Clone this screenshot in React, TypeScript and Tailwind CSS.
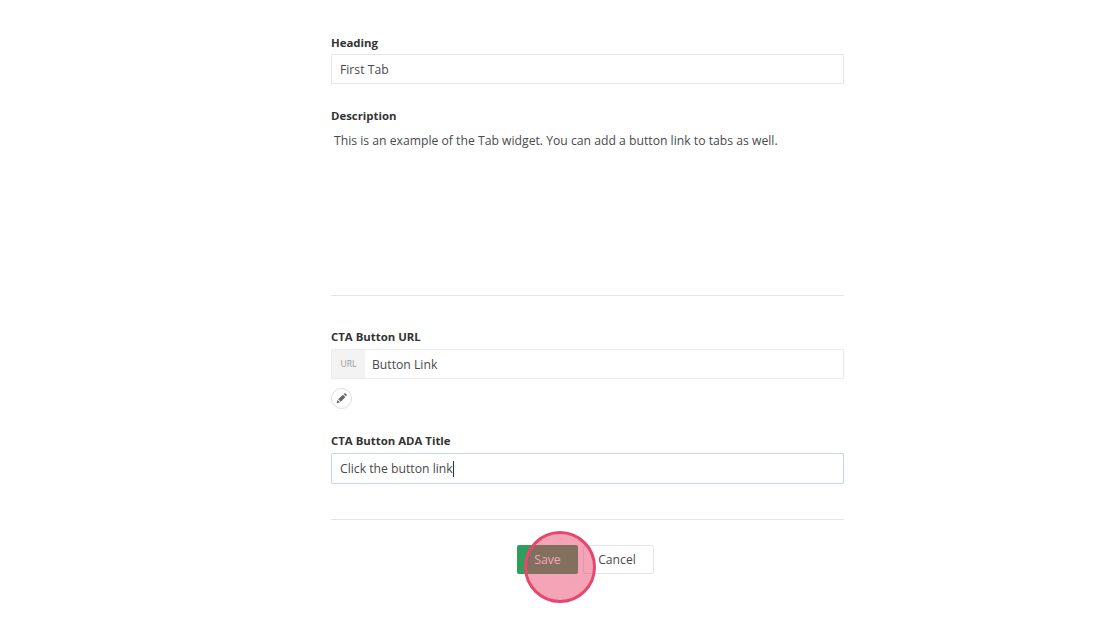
export default function App() {
  return (
    <div className="relative h-[627px] w-[1120px] overflow-hidden bg-white font-['Open_Sans',sans-serif] text-[12.2px] text-[#4a4a4a]">
      <div className="ml-[331px] flex w-[513px] flex-col pt-[34px]">
        <label className="text-[11.4px] leading-[18px] font-bold text-[#333]">Heading</label>
        <div className="mt-[2px] flex h-[30px] items-center border border-[#e8e8e8] px-2 pt-[2px]">First Tab</div>

        <label className="mt-[23px] text-[11.4px] leading-[18px] font-bold text-[#333]">Description</label>
        <p className="mt-[7px] h-[163px] pl-[3px] leading-[18px]">
          This is an example of the Tab widget. You can add a button link to tabs as well.
        </p>

        <hr className="border-[#e6e6e6]" />

        <label className="mt-[32px] text-[11.4px] leading-[18px] font-bold text-[#333]">CTA Button URL</label>
        <div className="mt-[3px] flex h-[30px] items-center border border-[#ebebeb]">
          <span className="flex h-full w-[33px] items-center justify-center bg-[#f3f3f3] text-[8.5px] text-[#999]">URL</span>
          <span className="pt-[2px] pl-[7px]">Button Link</span>
        </div>
        <button className="mt-[9px] flex h-[21px] w-[21px] items-center justify-center rounded-full border border-[#ddd] bg-white">
          <svg width="11" height="11" viewBox="0 0 16 16" fill="#666">
            <path d="M1 15 L2.2 10.2 L5.8 13.8 Z" />
            <path d="M3.2 9.2 L10 2.4 L13.6 6 L6.8 12.8 Z" />
            <path d="M11 1.4 L12 .6 C12.6 .1 13.3 .1 13.9 .6 L15.4 2.1 C15.9 2.7 15.9 3.4 15.4 4 L14.6 5 Z" />
          </svg>
        </button>

        <label className="mt-[23px] text-[11.4px] leading-[18px] font-bold text-[#333]">CTA Button ADA Title</label>
        <div className="mt-[3px] flex h-[31px] items-center rounded-[2px] border border-[#c8d8ea] px-2 pt-[2px] shadow-[0_0_1px_#dbe6f2]">
          Click the button link
          <span className="mb-[2px] h-[16px] w-px bg-[#333]" />
        </div>

        <hr className="mt-[35px] border-[#e6e6e6]" />

        <div className="mt-[25px] flex justify-center gap-[5px] pr-[5px]">
          <button className="h-[29px] w-[61px] rounded-[2px] bg-[#2f9e5b] pt-[2px] pl-[1px] text-white">Save</button>
          <button className="h-[29px] w-[71px] rounded-[2px] border border-[#e6e6e6] bg-white pt-[2px] pr-[2px]">Cancel</button>
        </div>
      </div>

      {/* click highlight over the save button */}
      <div className="absolute top-[531px] left-[524px] h-[72px] w-[72px] rounded-full border-[3px] border-[#e5476d] bg-[#e8365f]/45" />
    </div>
  );
}
